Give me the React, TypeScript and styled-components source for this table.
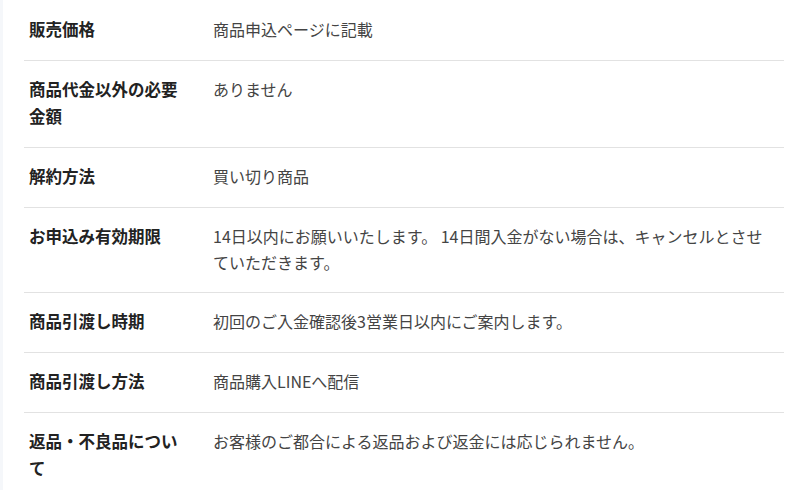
import { createGlobalStyle } from "styled-components";
import styled from "styled-components";

const GlobalStyle = createGlobalStyle`
  html, body {
    margin: 0;
    padding: 0;
    background: #f5f7fa;
  }
  body {
    font-family: "Noto Sans CJK JP", "Noto Sans", sans-serif;
  }
`;

// 白いメイン領域（左端に薄いグレーの帯が見える）
const StyledMain = styled.main`
  margin-left: 3px;
  background: #ffffff;
  min-height: 490px;
  padding: 0 19px 0 21px;
`;

const StyledTable = styled.div`
  display: flex;
  flex-direction: column;
`;

const StyledRow = styled.div`
  display: grid;
  grid-template-columns: 150px 1fr;
  column-gap: 34px;
  padding: 15px 0 17px 5px;
  border-bottom: 1px solid #e2e2e2;
  &:first-child {
    padding-top: 16px;
  }
`;

const StyledLabel = styled.div`
  font-size: 16.5px;
  font-weight: 700;
  line-height: 27px;
  color: #222222;
`;

const StyledValue = styled.div`
  font-size: 16px;
  font-weight: 400;
  line-height: 26px;
  color: #444444;
  padding-right: 8px;
`;

type Item = {
  label: string;
  value: string;
};

const items: Item[] = [
  { label: "販売価格", value: "商品申込ページに記載" },
  { label: "商品代金以外の必要金額", value: "ありません" },
  { label: "解約方法", value: "買い切り商品" },
  {
    label: "お申込み有効期限",
    value: "14日以内にお願いいたします。 14日間入金がない場合は、キャンセルとさせていただきます。",
  },
  { label: "商品引渡し時期", value: "初回のご入金確認後3営業日以内にご案内します。" },
  { label: "商品引渡し方法", value: "商品購入LINEへ配信" },
  { label: "返品・不良品について", value: "お客様のご都合による返品および返金には応じられません。" },
];

export default function App() {
  return (
    <>
      <GlobalStyle />
      <StyledMain>
        <StyledTable>
          {items.map((item) => (
            <StyledRow key={item.label}>
              <StyledLabel>{item.label}</StyledLabel>
              <StyledValue>{item.value}</StyledValue>
            </StyledRow>
          ))}
        </StyledTable>
      </StyledMain>
    </>
  );
}
